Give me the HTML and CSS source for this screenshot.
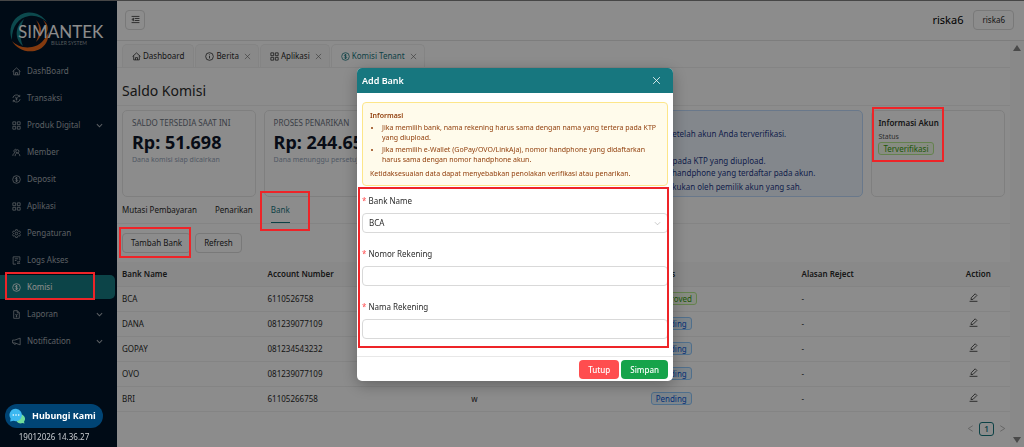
FILE: index.html
```html
<!DOCTYPE html>
<html lang="id">
<head>
<meta charset="utf-8">
<meta name="viewport" content="width=device-width, initial-scale=1">
<title>Saldo Komisi</title>
<link rel="stylesheet" href="styles.css">
</head>
<body>
<svg class="sprite" aria-hidden="true">
  <symbol id="i-home" viewBox="0 0 16 16"><path d="M1 8 8 1.6 15 8M3 6.6V14h10V6.6M6.2 14v-4h3.6v4"/></symbol>
  <symbol id="i-trx" viewBox="0 0 16 16"><path d="M1.500 7a6.600 6.600 0 0 1 12-2.500M14.500 9a6.600 6.600 0 0 1-12 2.500M13.800 1.500v3.200h-3M2.200 14.500v-3.200h3M5.800 4.800 8 8l2.200-3.200M8 8v3.500M6 8.800h4"/></symbol>
  <symbol id="i-apps" viewBox="0 0 16 16"><path d="M1.500 1.500h5v5h-5zM9.500 1.500h5v5h-5zM1.500 9.500h5v5h-5zM9.500 9.500h5v5h-5z"/></symbol>
  <symbol id="i-team" viewBox="0 0 16 16"><path d="M1.500 14c0-3 1.500-5 4-5.500M3.500 5.500a3 3 0 0 1 4-3M9.500 3a2.800 2.800 0 1 1 0 5.600 2.800 2.800 0 0 1 0-5.600zM5.500 14.500c0-3.500 1.800-5.500 4-5.500s4.500 2 4.500 5.500M3.500 5.500c0 1.500.7 2.500 2 3"/></symbol>
  <symbol id="i-dollar" viewBox="0 0 16 16"><circle cx="8" cy="8" r="6.800"/><path d="M10 6c-.3-.9-1-1.300-2-1.300-1.200 0-2 .6-2 1.500C6 8.400 10.100 7.300 10.100 9.700c0 1-.9 1.600-2.100 1.600-1.100 0-2-.5-2.200-1.500M8 3.500v9"/></symbol>
  <symbol id="i-gear" viewBox="0 0 16 16"><path d="M6.500 1.200h3l.5 2 1.500.9 2-.6 1.500 2.600-1.500 1.400v1.200l1.500 1.400-1.500 2.600-2-.6-1.500.9-.5 2h-3l-.5-2-1.500-.9-2 .6L1 10.100l1.500-1.400V7.500L1 6.100l1.500-2.600 2 .6L6 3.200z"/><circle cx="8" cy="8" r="2.300"/></symbol>
  <symbol id="i-log" viewBox="0 0 16 16"><path d="M14 8V1.500H2v13h5M5 5h6M5 8h3M9 10.500h5l-1.200-1.300M14.500 13h-5l1.200 1.300"/></symbol>
  <symbol id="i-file" viewBox="0 0 16 16"><path d="M3 1.200h6.500L13 4.800v10H3zM9.300 1.200V5H13M6 7l2 2.500L10 7M8 9.500V13M6.500 11h3"/></symbol>
  <symbol id="i-horn" viewBox="0 0 16 16"><path d="M1 5.500h4L14.500 2v12L5 10.500H1zM3 10.500c0 3.500 4 3.500 4 .8"/></symbol>
  <symbol id="i-info" viewBox="0 0 16 16"><circle cx="8" cy="8" r="6.800"/><path d="M8 7v4.500M8 4.300v1.400"/></symbol>
  <symbol id="i-down" viewBox="0 0 16 16"><path d="m2 5 6 6 6-6"/></symbol>
  <symbol id="i-left" viewBox="0 0 16 16"><path d="M12 3 4 8l8 5"/></symbol>
  <symbol id="i-right" viewBox="0 0 16 16"><path d="m4 3 8 5-8 5"/></symbol>
  <symbol id="i-x" viewBox="0 0 16 16"><path d="m2 2 12 12M14 2 2 14"/></symbol>
  <symbol id="i-fold" viewBox="0 0 16 16"><path d="M1 2.500h14M6.500 6.200H15M6.500 9.800H15M1 13.500h14M4.500 5.800 1.500 8l3 2.200z"/></symbol>
  <symbol id="i-edit" viewBox="0 0 16 16"><path d="M1 14.800h14M3.500 11.800l.7-3.600L11 1.400l3 3-6.800 6.800z"/></symbol>
</svg>

<div class="app">
  <aside class="sidebar">
    <svg class="logo" viewBox="0 0 96 42" role="img" aria-label="Simantek Biller System">
      <path d="M3 29C-2 17 5 3 19 1.500 27 .8 34 5 38 11 33 6.500 27 4 20 5 9 6.500 2.500 17 3 29z" class="teal"/>
      <path d="M14 35C5 28 6 15 15 8 11 16 10 26 14 35z" class="teal"/>
      <path d="M3 30C8 39 20 43 30 38.500 37 35 40 28 39.500 21 36 29 31 34.500 23 36 15 37.500 8 35 3 30z" class="orange"/>
      <path d="M27 9C31 15 31 23 27 31 34 25 34 15 27 9zM34 9c4 5 4 10 2 15 4-4 4-11-2-15z" class="orange"/>
      <text x="9" y="27" class="logo-name">SIMANTEK</text>
      <text x="42" y="34" class="logo-sub">BILLER SYSTEM</text>
    </svg>
    <nav class="menu">
      <a href="#"><svg class="icon"><use href="#i-home"/></svg><span>DashBoard</span></a>
      <a href="#"><svg class="icon"><use href="#i-trx"/></svg><span>Transaksi</span></a>
      <a href="#"><svg class="icon"><use href="#i-apps"/></svg><span>Produk Digital</span><svg class="icon chev"><use href="#i-down"/></svg></a>
      <a href="#"><svg class="icon"><use href="#i-team"/></svg><span>Member</span></a>
      <a href="#"><svg class="icon"><use href="#i-dollar"/></svg><span>Deposit</span></a>
      <a href="#"><svg class="icon"><use href="#i-apps"/></svg><span>Aplikasi</span></a>
      <a href="#"><svg class="icon"><use href="#i-gear"/></svg><span>Pengaturan</span></a>
      <a href="#"><svg class="icon"><use href="#i-log"/></svg><span>Logs Akses</span></a>
      <a href="#" class="current mark mark-menu"><svg class="icon"><use href="#i-dollar"/></svg><span>Komisi</span></a>
      <a href="#"><svg class="icon"><use href="#i-file"/></svg><span>Laporan</span><svg class="icon chev"><use href="#i-down"/></svg></a>
      <a href="#"><svg class="icon"><use href="#i-horn"/></svg><span>Notification</span><svg class="icon chev"><use href="#i-down"/></svg></a>
    </nav>
    <div class="help">
      <button type="button" class="contact">
        <svg class="chat" viewBox="0 0 16 16" aria-hidden="true">
          <path d="M10 6.500a4.600 4.600 0 0 1 5 7.200l.5 1.800-2-.4A4.600 4.600 0 0 1 7 12z" fill="#6fdc9c"/>
          <path d="M7 .8a6.200 6.200 0 1 1-2.500 12L1.200 13.500 1.600 10.500A6.200 6.200 0 0 1 7 .8z" fill="#3cb8f0"/>
          <circle cx="4.300" cy="7" r=".8" fill="#fff"/><circle cx="7" cy="7" r=".8" fill="#fff"/><circle cx="9.700" cy="7" r=".8" fill="#fff"/>
        </svg>
        <span>Hubungi Kami</span>
      </button>
      <time>19012026 14.36.27</time>
    </div>
  </aside>

  <div class="main">
    <header class="topbar">
      <button type="button" class="btn fold" aria-label="Menu"><svg class="icon"><use href="#i-fold"/></svg></button>
      <span class="user">riska6</span>
      <button type="button" class="btn account">riska6</button>
    </header>

    <div class="scroller">
      <main class="content">
        <nav class="pages">
          <a href="#"><svg class="icon"><use href="#i-home"/></svg>Dashboard</a>
          <a href="#"><svg class="icon"><use href="#i-info"/></svg>Berita<svg class="icon close"><use href="#i-x"/></svg></a>
          <a href="#"><svg class="icon"><use href="#i-apps"/></svg>Aplikasi<svg class="icon close"><use href="#i-x"/></svg></a>
          <a href="#" class="on"><svg class="icon"><use href="#i-dollar"/></svg>Komisi Tenant<svg class="icon close"><use href="#i-x"/></svg></a>
        </nav>
        <h1>Saldo Komisi</h1>

        <section class="cards">
          <article class="card stat">
            <h2>SALDO TERSEDIA SAAT INI</h2>
            <strong>Rp: 51.698</strong>
            <p>Dana komisi siap dicairkan</p>
          </article>
          <article class="card stat">
            <h2>PROSES PENARIKAN</h2>
            <strong>Rp: 244.650</strong>
            <p>Dana menunggu persetujuan</p>
          </article>
          <article class="card note">
            <h2>Informasi</h2>
            <p>Penarikan saldo komisi pada rekening bank hanya dapat dilakukan setelah akun Anda terverifikasi.</p>
            <h3>Ketentuan</h3>
            <ul>
              <li>Jika bank, nama rekening harus sama dengan nama yang tertera pada KTP yang diupload.</li>
              <li>Jika memilih e-Wallet, nomor telepon harus sama dengan nomor handphone yang terdaftar pada akun.</li>
            </ul>
            <p>Hal ini dilakukan demi menjaga keamanan dan penarikan hanya dilakukan oleh pemilik akun yang sah.</p>
          </article>
          <article class="card info mark mark-info">
            <h2>Informasi Akun</h2>
            <p>Status</p>
            <span class="tag green">Terverifikasi</span>
          </article>
        </section>

        <div class="tabs" role="tablist">
          <button type="button" role="tab">Mutasi Pembayaran</button>
          <button type="button" role="tab">Penarikan</button>
          <button type="button" role="tab" aria-selected="true" class="on mark mark-tab">Bank</button>
        </div>

        <div class="actions">
          <button type="button" class="btn mark mark-add">Tambah Bank</button>
          <button type="button" class="btn">Refresh</button>
        </div>

        <table class="banks">
          <colgroup><col class="c1"><col class="c2"><col class="c3"><col class="c4"><col class="c5"><col class="c6"></colgroup>
          <thead>
            <tr><th>Bank Name</th><th>Account Number</th><th>Account Name</th><th>Status</th><th>Alasan Reject</th><th>Action</th></tr>
          </thead>
          <tbody>
            <tr><td>BCA</td><td>6110526758</td><td>Riska</td><td><span class="tag green">Approved</span></td><td>-</td><td><button type="button" aria-label="Edit"><svg class="icon"><use href="#i-edit"/></svg></button></td></tr>
            <tr><td>DANA</td><td>081239077109</td><td>Riska</td><td><span class="tag blue">Pending</span></td><td>-</td><td><button type="button" aria-label="Edit"><svg class="icon"><use href="#i-edit"/></svg></button></td></tr>
            <tr><td>GOPAY</td><td>081234543232</td><td>Riska</td><td><span class="tag blue">Pending</span></td><td>-</td><td><button type="button" aria-label="Edit"><svg class="icon"><use href="#i-edit"/></svg></button></td></tr>
            <tr><td>OVO</td><td>081239077109</td><td>Riska</td><td><span class="tag blue">Pending</span></td><td>-</td><td><button type="button" aria-label="Edit"><svg class="icon"><use href="#i-edit"/></svg></button></td></tr>
            <tr><td>BRI</td><td>61105266758</td><td>w</td><td><span class="tag blue">Pending</span></td><td>-</td><td><button type="button" aria-label="Edit"><svg class="icon"><use href="#i-edit"/></svg></button></td></tr>
          </tbody>
        </table>

        <nav class="pager">
          <button type="button" aria-label="Previous"><svg class="icon"><use href="#i-left"/></svg></button>
          <button type="button" class="on">1</button>
          <button type="button" aria-label="Next"><svg class="icon"><use href="#i-right"/></svg></button>
        </nav>
      </main>
      <div class="scrollbar" aria-hidden="true"><i class="up"></i><i class="down"></i></div>
    </div>
  </div>
</div>

<div class="mask">
  <form class="modal" role="dialog" aria-labelledby="dlg-title">
    <header>
      <h2 id="dlg-title">Add Bank</h2>
      <button type="button" aria-label="Close"><svg class="icon"><use href="#i-x"/></svg></button>
    </header>
    <div class="body">
      <div class="alert">
        <b>Informasi</b>
        <ul>
          <li>Jika memilih bank, nama rekening harus sama dengan nama yang tertera pada KTP yang diupload.</li>
          <li>Jika memilih e-Wallet (GoPay/OVO/LinkAja), nomor handphone yang didaftarkan harus sama dengan nomor handphone akun.</li>
        </ul>
        <p>Ketidaksesuaian data dapat menyebabkan penolakan verifikasi atau penarikan.</p>
      </div>
      <div class="fields mark mark-form">
        <div class="field">
          <label for="bank">Bank Name</label>
          <div class="select">
            <select id="bank"><option>BCA</option></select>
            <svg class="icon"><use href="#i-down"/></svg>
          </div>
        </div>
        <div class="field">
          <label for="number">Nomor Rekening</label>
          <input id="number" type="text">
        </div>
        <div class="field">
          <label for="name">Nama Rekening</label>
          <input id="name" type="text">
        </div>
      </div>
    </div>
    <footer>
      <button type="button" class="danger">Tutup</button>
      <button type="submit" class="success">Simpan</button>
    </footer>
  </form>
</div>
</body>
</html>
```

FILE: styles.css
```css
* { box-sizing: border-box; margin: 0; padding: 0; }

body {
  font: 8px/12px "Noto Sans", "Open Sans", sans-serif;
  color: #2a2a2a;
  background: #fff;
}

button, input, select { font: inherit; color: inherit; background: none; border: 0; }
a { color: inherit; text-decoration: none; }
ul { padding-left: 12px; }

.sprite { display: none; }
.icon {
  width: 9px;
  height: 9px;
  flex: none;
  fill: none;
  stroke: currentColor;
  stroke-width: 1.4;
}

.app {
  display: flex;
  min-height: 100vh;
  border-top: 1px solid #808080;
}

/* Red highlight frames, drawn above the mask */
.mark { position: relative; }
.mark::after {
  content: "";
  position: absolute;
  z-index: 20;
  border: 2px solid #ee2428;
  pointer-events: none;
}
.mark-menu::after { inset: -3px 20px -1px 5px; }
.mark-info::after { inset: -4px 60px 34px 0; }
.mark-tab::after { inset: -6px -20px -9px -11px; }
.mark-add::after { inset: -7px -1px -6px -4px; }
.mark-form::after { inset: 1px -1px -9px -4px; }

/* Sidebar */
.sidebar {
  display: flex;
  flex-direction: column;
  width: 117px;
  flex: none;
  background: #001529;
  color: #a6adb4;
}
.logo { width: 96px; height: 42px; margin: 10px 0 6px 9px; }
.teal { fill: #17858c; }
.orange { fill: #ee6a1c; }
.logo-name { font: 400 17px "Lato", sans-serif; fill: #fff; }
.logo-sub { font: 5px "Lato", sans-serif; fill: #9aa0a6; }

.menu { display: flex; flex-direction: column; gap: 3px; }
.menu a {
  display: flex;
  align-items: center;
  gap: 6px;
  height: 24px;
  margin-right: 2px;
  padding: 0 12px;
  border-radius: 0 5px 5px 0;
}
.menu .current { background: #177d83; color: #fff; }
.menu .chev { width: 7px; height: 7px; margin-left: auto; stroke-width: 2.4; }

.help {
  position: relative;
  z-index: 20;
  display: flex;
  flex-direction: column;
  gap: 3px;
  margin: auto 14px 4px 5px;
  text-align: center;
  color: #c8ccd0;
}
.contact {
  display: flex;
  align-items: center;
  gap: 7px;
  height: 24px;
  padding: 0 4px;
  border-radius: 12px;
  background: #004474;
  color: #fff;
  font-size: 9px;
  font-weight: 700;
  white-space: nowrap;
}
.chat { width: 16px; height: 16px; flex: none; }

/* Top bar */
.main { display: flex; flex-direction: column; flex: 1; min-width: 0; }
.topbar {
  display: flex;
  align-items: center;
  gap: 10px;
  height: 40px;
  padding: 0 10px 2px 8px;
  border-bottom: 1px solid #e4e4e4;
}
.btn {
  height: 20px;
  padding: 0 8px;
  border: 1px solid #dcdcdc;
  border-radius: 4px;
}
.fold { display: flex; align-items: center; justify-content: center; width: 20px; padding: 0; }
.user { margin-left: auto; font-size: 11px; color: #000; }

.scroller { display: flex; flex: 1; }
.content { flex: 1; min-width: 0; }
.scrollbar {
  display: flex;
  flex-direction: column;
  justify-content: space-between;
  align-items: center;
  width: 14px;
  padding: 4px 0;
  background: #fafafa;
}
.scrollbar i { border: 4px solid transparent; }
.scrollbar .up { border-top: 0; border-bottom: 6px solid #858585; }
.scrollbar .down { border-bottom: 0; border-top: 6px solid #858585; }

/* Open pages */
.pages {
  display: flex;
  gap: 1px;
  padding: 3px 5px 0;
  border-bottom: 1px solid #f0f0f0;
}
.pages a {
  display: flex;
  align-items: center;
  gap: 2px;
  height: 23px;
  padding: 0 9px;
  border: 1px solid #f0f0f0;
  border-bottom: 0;
  border-radius: 5px 5px 0 0;
  background: #fafafa;
}
.pages a + a { padding-right: 7px; }
.pages .on { background: #fff; color: #17777f; }
.pages .close { width: 7px; height: 7px; margin-left: 3px; color: #666; }

h1 {
  padding: 12px 5px 4px;
  font-size: 14px;
  line-height: 21px;
  font-weight: 400;
  border-bottom: 1px solid #f0f0f0;
}

/* Summary cards */
.cards {
  display: grid;
  grid-template-columns: minmax(0, 7fr) minmax(0, 7fr) minmax(0, 24fr) minmax(0, 7fr);
  gap: 8px;
  padding: 4px 5px 0;
}
.card {
  height: 87px;
  padding: 7px 6px;
  border: 1px solid #e8e8e8;
  border-radius: 5px;
  white-space: nowrap;
}
.card h2 { font-size: 8px; line-height: 10px; font-weight: 600; }
.card.stat, .card.note { padding: 7px 9px; }
.card.stat h2 { font-weight: 400; color: #6b7280; }
.stat strong { display: block; font-size: 18px; line-height: 28px; font-weight: 700; color: #0f172a; }
.stat p { font-size: 7px; line-height: 8px; color: #94a3b8; }
.card.note { background: #eff6ff; border-color: #bfdbfe; color: #1e3a8a; }
.note h3 { margin-top: 1px; font-size: 8px; line-height: 14px; font-weight: 600; }
.note ul + p { margin-top: 2px; }
.info p { margin-top: 4px; font-size: 7px; line-height: 10px; color: #555; }

.tag {
  display: inline-block;
  padding: 0 4px;
  border: 1px solid;
  border-radius: 3px;
  line-height: 11px;
}
.green { color: #389e0d; background: #f6ffed; border-color: #b7eb8f; }
.blue { color: #0958d9; background: #e6f4ff; border-color: #91caff; }

/* Tabs and actions */
.tabs {
  display: flex;
  gap: 18px;
  padding: 0 5px;
  border-bottom: 1px solid #f0f0f0;
}
.tabs button { height: 26px; border-bottom: 1px solid transparent; }
.tabs .on { color: #17777f; border-color: #17777f; }
.actions { display: flex; gap: 4px; padding: 9px 5px; }

/* Bank table */
.banks { width: 100%; table-layout: fixed; border-collapse: collapse; text-align: left; }
.banks .c1 { width: 16.3%; }
.banks .c2 { width: 22.8%; }
.banks .c3 { width: 20.1%; }
.banks .c4 { width: 16.9%; }
.banks .c5 { width: 18.4%; }
.banks th, .banks td { padding: 0 5px; border-bottom: 1px solid #f0f0f0; }
.banks th { height: 24px; background: #fafafa; font-weight: 600; }
.banks td { height: 25px; }
.banks td button { display: block; padding: 0 3px; }

.pager { display: flex; justify-content: flex-end; align-items: center; gap: 4px; padding: 10px 3px 8px; }
.pager button { display: flex; color: #aaa; }
.pager .on {
  justify-content: center;
  width: 15px;
  border: 1px solid #17777f;
  border-radius: 3px;
  color: #17777f;
  font-weight: 600;
}

/* Dialog */
.mask {
  position: fixed;
  inset: 0;
  z-index: 10;
  display: flex;
  justify-content: center;
  align-items: flex-start;
  padding: 68px 0 0 6px;
  background: rgba(0, 0, 0, .45);
}
.modal {
  width: 316px;
  border-radius: 5px;
  background: #fff;
  box-shadow: 0 4px 16px rgba(0, 0, 0, .3);
}
.modal header {
  display: flex;
  justify-content: space-between;
  align-items: center;
  height: 25px;
  padding: 0 12px 0 5px;
  border-radius: 5px 5px 0 0;
  background: #17777f;
  color: #fff;
}
.modal header h2 { font-size: 9px; font-weight: 600; }
.modal header button { display: flex; }
.body { padding: 9px 5px 17px; }
.alert {
  padding: 8px 7px 6px;
  border: 1px solid #fde68a;
  border-radius: 4px;
  background: #fffbeb;
  color: #92400e;
  font-size: 7px;
  line-height: 10px;
}
.alert b { display: block; font-weight: 600; }
.alert li { margin-top: 2px; }
.alert p { margin-top: 4px; }
.fields { display: grid; gap: 15px; padding-top: 9px; }
.field label { display: block; margin-bottom: 6px; }
.field label::before { content: "* "; color: #ff4d4f; }
.field input, .field select {
  display: block;
  width: 100%;
  height: 20px;
  padding: 0 6px;
  border: 1px solid #d9d9d9;
  border-radius: 4px;
  appearance: none;
}
.select { display: grid; align-items: center; }
.select > * { grid-area: 1 / 1; }
.select .icon { justify-self: end; width: 7px; height: 7px; margin-right: 7px; color: #aaa; pointer-events: none; }
.modal footer {
  display: flex;
  justify-content: flex-end;
  gap: 2px;
  padding: 3px 5px 2px;
  border-top: 1px solid #e8e8e8;
}
.modal footer button { height: 19px; padding: 0 9px; border-radius: 4px; color: #fff; font-weight: 500; }
.modal footer .success { background: #16a34a; }
.modal footer .danger { background: #ff4d4f; }
```
